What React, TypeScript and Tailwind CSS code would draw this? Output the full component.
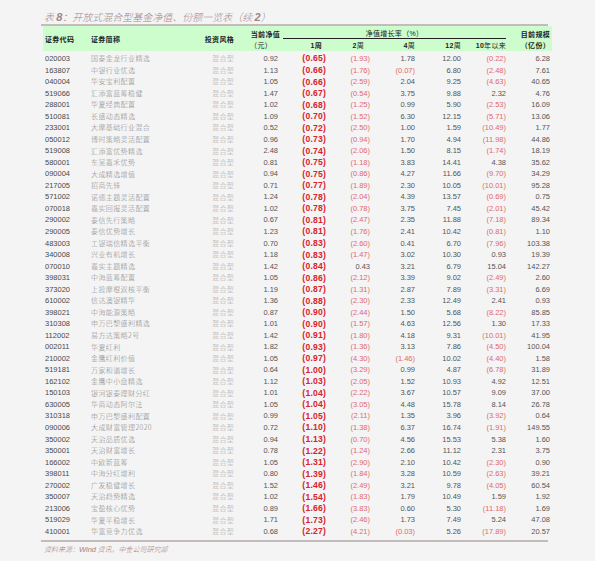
import React from "react";

const rows: string[][] = [
  ["020003", "国泰金龙行业精选", "0.92", "(0.65)", "(1.93)", "1.78", "12.00", "(0.22)", "6.28"],
  ["163807", "中银行业优选", "1.13", "(0.66)", "(1.76)", "(0.07)", "6.80", "(2.48)", "7.61"],
  ["040004", "华安宝利配置", "1.05", "(0.66)", "(2.59)", "2.04", "9.25", "(4.63)", "40.65"],
  ["519066", "汇添富蓝筹稳健", "1.47", "(0.67)", "(0.54)", "3.75", "9.88", "2.32", "4.76"],
  ["288001", "华夏经典配置", "1.02", "(0.68)", "(1.25)", "0.99", "5.90", "(2.53)", "16.09"],
  ["510081", "长盛动态精选", "1.09", "(0.70)", "(1.52)", "6.30", "12.15", "(5.71)", "13.06"],
  ["233001", "大摩基础行业混合", "0.52", "(0.72)", "(2.50)", "1.00", "1.59", "(10.49)", "1.77"],
  ["050012", "博时策略灵活配置", "0.96", "(0.73)", "(0.94)", "1.70", "4.94", "(11.98)", "44.86"],
  ["519008", "汇添富优势精选", "2.48", "(0.74)", "(2.06)", "1.50", "8.15", "(1.74)", "18.19"],
  ["580001", "东吴嘉禾优势", "0.81", "(0.75)", "(1.18)", "3.83", "14.41", "4.38", "35.62"],
  ["090004", "大成精选增值", "0.94", "(0.75)", "(0.86)", "4.27", "11.66", "(9.70)", "34.29"],
  ["217005", "招商先锋", "0.71", "(0.77)", "(1.89)", "2.30", "10.05", "(10.01)", "95.28"],
  ["571002", "诺德主题灵活配置", "1.24", "(0.78)", "(2.04)", "4.39", "13.57", "(0.69)", "0.75"],
  ["070018", "嘉实回报灵活配置", "1.02", "(0.78)", "(0.78)", "3.75", "7.45", "(2.01)", "45.42"],
  ["290002", "泰信先行策略", "0.67", "(0.81)", "(2.47)", "2.35", "11.88", "(7.18)", "89.34"],
  ["290005", "泰信优势增长", "1.23", "(0.81)", "(1.76)", "2.41", "10.42", "(0.81)", "1.10"],
  ["483003", "工银瑞信精选平衡", "0.70", "(0.83)", "(2.60)", "0.41", "6.70", "(7.96)", "103.38"],
  ["340008", "兴业有机增长", "1.18", "(0.83)", "(1.47)", "3.02", "10.30", "0.93", "19.39"],
  ["070010", "嘉实主题精选", "1.42", "(0.84)", "0.43", "3.21", "6.79", "15.04", "142.27"],
  ["398031", "中海蓝筹配置", "1.05", "(0.86)", "(2.12)", "3.39", "9.02", "(2.49)", "2.60"],
  ["373020", "上投摩根双核平衡", "1.19", "(0.87)", "(1.31)", "2.87", "7.89", "(3.31)", "6.69"],
  ["610002", "信达澳银精华", "1.36", "(0.88)", "(2.30)", "2.33", "12.49", "2.41", "0.93"],
  ["398021", "中海能源策略", "0.87", "(0.90)", "(2.44)", "1.50", "5.68", "(8.22)", "85.85"],
  ["310308", "申万巴黎盛利精选", "1.01", "(0.90)", "(1.57)", "4.63", "12.56", "1.30", "17.33"],
  ["112002", "易方达策略2号", "1.42", "(0.91)", "(1.80)", "4.18", "9.31", "(10.01)", "41.95"],
  ["002011", "华夏红利", "1.82", "(0.93)", "(1.36)", "3.13", "7.86", "(4.50)", "100.04"],
  ["210002", "金鹰红利价值", "1.05", "(0.97)", "(4.30)", "(1.46)", "10.02", "(4.40)", "1.58"],
  ["519181", "万家和谐增长", "0.64", "(1.00)", "(3.29)", "0.99", "4.87", "(6.78)", "31.89"],
  ["162102", "金鹰中小盘精选", "1.12", "(1.03)", "(2.05)", "1.52", "10.93", "4.92", "12.51"],
  ["150103", "银河银泰理财分红", "1.01", "(1.04)", "(2.22)", "3.67", "10.57", "9.09", "37.00"],
  ["630005", "华商动态阿尔法", "1.05", "(1.04)", "(3.05)", "4.48", "15.78", "8.14", "26.78"],
  ["310318", "申万巴黎盛利配置", "0.99", "(1.05)", "(2.11)", "1.35", "3.96", "(3.92)", "0.64"],
  ["090006", "大成财富管理2020", "0.72", "(1.10)", "(1.38)", "6.37", "16.74", "(1.91)", "149.55"],
  ["350002", "天治品质优选", "0.94", "(1.13)", "(0.70)", "4.56", "15.53", "5.38", "1.60"],
  ["350001", "天治财富增长", "0.78", "(1.22)", "(1.24)", "2.66", "11.12", "2.31", "3.75"],
  ["166002", "中欧新蓝筹", "1.05", "(1.31)", "(2.90)", "2.10", "10.42", "(2.30)", "0.90"],
  ["398011", "中海分红增利", "0.80", "(1.39)", "(1.84)", "3.28", "10.59", "(2.63)", "39.21"],
  ["270002", "广发稳健增长", "1.52", "(1.46)", "(2.49)", "3.21", "9.78", "(4.05)", "60.54"],
  ["350007", "天治趋势精选", "1.02", "(1.54)", "(1.83)", "1.79", "10.49", "1.59", "1.92"],
  ["213006", "宝盈核心优势", "0.89", "(1.66)", "(3.83)", "0.60", "5.30", "(11.18)", "1.69"],
  ["519029", "华夏平稳增长", "1.71", "(1.73)", "(2.46)", "1.73", "7.49", "5.24", "47.08"],
  ["410001", "华富竞争力优选", "0.68", "(2.27)", "(4.21)", "(0.03)", "5.26", "(17.89)", "20.57"],
];

const GRID = "grid grid-cols-[45px_112px_34px_44px_48px_44px_45px_46px_45px_44px]";
const NUM = "font-['Liberation_Sans',Arial,sans-serif] text-[7.5px] text-right";
const CJK = "font-['Noto_Sans_CJK_SC',sans-serif]";

function Num({ v, bold }: { v: string; bold?: boolean }) {
  const neg = v.startsWith("(");
  if (bold) {
    return (
      <span className="font-['Liberation_Sans',Arial,sans-serif] text-[8.6px] font-bold text-right text-[#d8232a] tracking-[0.2px]">
        {v}
      </span>
    );
  }
  return <span className={`${NUM} ${neg ? "text-[#e26868]" : "text-[#555555]"}`}>{v}</span>;
}

export default function App() {
  return (
    <div className="w-[595px] h-[561px] bg-[#f4f4f4] pl-[41px] pt-[10px] overflow-hidden">
      <div
        className={`${CJK} italic font-light text-[10px] leading-[14px] text-[#a08585] pl-[3px]`}
      >
        表 <span className="font-['Liberation_Sans',Arial,sans-serif] font-bold text-[11px]">8</span>：开放式混合型基金净值、份额一览表（续{" "}
        <span className="font-['Liberation_Sans',Arial,sans-serif] font-bold text-[11px]">2</span>）
      </div>
      <div className="w-[507px] h-[2px] bg-[#c4bcbc]" />
      {/* header */}
      <div className="ml-[2px] w-[509px] h-[25px] bg-[#cdfccd]">
        <div className={`${GRID} grid-rows-[13px_12px] h-[25px] ${CJK} font-bold text-[7px] text-[#222222] tracking-[0.3px]`}>
          <div className="row-span-2 flex items-center pl-[2px] pt-[2px]">证券代码</div>
          <div className="row-span-2 flex items-center pl-[3px] pt-[2px]">证券简称</div>
          <div className="row-span-2 flex items-center justify-end pt-[2px] whitespace-nowrap">投资风格</div>
          <div className="flex items-end justify-end leading-none pb-[1px] -mr-[2px] whitespace-nowrap">当前净值</div>
          <div className="col-span-5 flex items-end justify-center leading-none ml-[5px] border-b border-[#222222] pb-[1px] whitespace-nowrap font-normal">
            净值增长率（<span className="font-['Liberation_Sans',Arial,sans-serif]">%</span>）
          </div>
          <div className="flex items-end justify-end leading-none pb-[1px] whitespace-nowrap">目前规模</div>
          <div className="col-start-4 flex items-center justify-end pr-[6px] leading-none font-normal">（元）</div>
          <div className="flex items-center justify-end pr-[4px] leading-none">
            <span className="font-['Liberation_Sans',Arial,sans-serif]">1</span>周
          </div>
          <div className="flex items-center justify-end pr-[6px] leading-none font-normal">
            <span className="font-['Liberation_Sans',Arial,sans-serif] font-bold">2</span>周
          </div>
          <div className="flex items-center justify-end leading-none font-normal">
            <span className="font-['Liberation_Sans',Arial,sans-serif] font-bold">4</span>周
          </div>
          <div className="flex items-center justify-end leading-none font-normal">
            <span className="font-['Liberation_Sans',Arial,sans-serif] font-bold">12</span>周
          </div>
          <div className="flex items-center justify-end leading-none whitespace-nowrap font-normal">
            <span className="font-['Liberation_Sans',Arial,sans-serif] font-bold">10</span>年以来
          </div>
          <div className="flex items-center justify-end leading-none whitespace-nowrap">（亿份）</div>
        </div>
      </div>
      {/* rows */}
      <div className="ml-[2px] pt-[2px] pb-[3px]">
        {rows.map((r) => (
          <div key={r[0]} className={`${GRID} h-[11.54px] items-center leading-none`}>
            <span className="font-['Liberation_Sans',Arial,sans-serif] text-[7.5px] text-[#4a4a4a] pl-[2px]">{r[0]}</span>
            <span className={`${CJK} font-light text-[7px] tracking-[0.4px] text-[#888888] pl-[3px] whitespace-nowrap`}>{r[1]}</span>
            <span className={`${CJK} font-light text-[7px] tracking-[0.3px] text-[#a5a5a5] text-right whitespace-nowrap`}>混合型</span>
            <Num v={r[2]} />
            <Num v={r[3]} bold />
            <Num v={r[4]} />
            <Num v={r[5]} />
            <Num v={r[6]} />
            <Num v={r[7]} />
            <Num v={r[8]} />
          </div>
        ))}
      </div>
      <div className="w-[507px] h-[1.5px] bg-[#c4bcbc]" />
      <div className={`${CJK} italic font-light text-[7px] leading-[12px] mt-[1px] pl-[3px] text-[#a88080]`}>
        资料来源：<span className="font-['Liberation_Sans',Arial,sans-serif] text-[7.5px]">Wind</span> 资讯，中金公司研究部
      </div>
    </div>
  );
}
